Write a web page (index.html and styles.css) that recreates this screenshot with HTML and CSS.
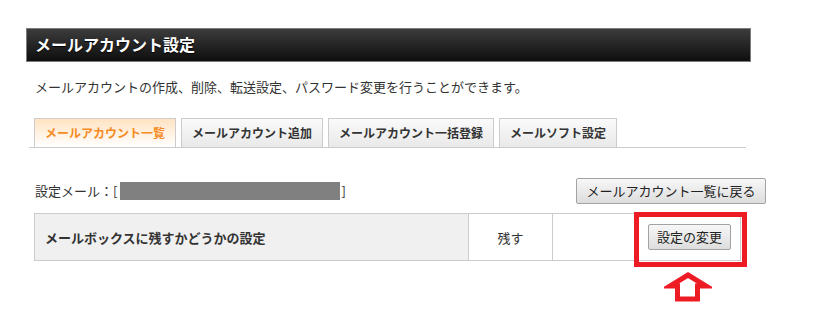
FILE: index.html
```html
<!DOCTYPE html>
<html lang="ja">
<head>
<meta charset="utf-8">
<title>メールアカウント設定</title>
<link rel="stylesheet" href="styles.css">
</head>
<body>
<div class="page">
  <div class="titlebar">メールアカウント設定</div>
  <p class="desc">メールアカウントの作成、削除、転送設定、パスワード変更を行うことができます。</p>
  <div class="tabbar">
    <div class="tab active">メールアカウント一覧</div>
    <div class="tab">メールアカウント追加</div>
    <div class="tab">メールアカウント一括登録</div>
    <div class="tab">メールソフト設定</div>
  </div>
  <div class="mailrow">
    <div class="mailtext">設定メール：[<span class="redact"></span>]</div>
    <button class="btn back">メールアカウント一覧に戻る</button>
  </div>
  <div class="settings-wrap">
    <div class="settings">
      <div class="cell label">メールボックスに残すかどうかの設定</div>
      <div class="cell value">残す</div>
      <div class="cell action"><button class="btn change">設定の変更</button></div>
    </div>
    <div class="highlight"></div>
    <svg class="arrow" width="48" height="34" viewBox="0 0 48 34">
      <polygon points="24,5 42,16 33.5,16 33.5,29 13.5,29 13.5,16 6,16" fill="#fff" stroke="#ed1c24" stroke-width="5" stroke-linejoin="miter"/>
    </svg>
  </div>
</div>
</body>
</html>
```
FILE: styles.css
```css
* { box-sizing: border-box; }
html, body { height: 100%; }
body {
  margin: 0;
  background: #fff;
  font-family: "Noto Sans CJK JP", "Noto Sans", sans-serif;
  color: #333;
}
.page {
  padding: 28px 0 0 26px;
  width: 800px;
  min-height: 325px;
}
.titlebar {
  width: 725px;
  height: 34px;
  border: 1px solid #7c7c7c;
  background: linear-gradient(to bottom, #3c3c3c, #0e0e0e);
  color: #fff;
  font-size: 16px;
  font-weight: bold;
  line-height: 31px;
  padding-left: 8px;
  text-shadow: 0 1px 1px #000;
}
.desc {
  margin: 15px 0 0 9px;
  font-size: 13px;
  line-height: 20px;
}
.tabbar {
  margin: 21px 0 0 3px;
  width: 717px;
  display: flex;
  gap: 5px;
  padding-left: 5px;
  border-bottom: 1px solid #cccccc;
}
.tab {
  height: 29px;
  padding: 0 10px;
  border: 1px solid #cccccc;
  border-bottom: none;
  background: linear-gradient(to bottom, #fafafa, #e9e9e9);
  font-size: 12px;
  font-weight: bold;
  line-height: 28px;
  color: #333;
  white-space: nowrap;
}
.tab.active {
  background: linear-gradient(to bottom, #ffe3c2, #ffffff);
  color: #f68b1f;
}
.mailrow {
  margin: 30px 0 0 9px;
  width: 731px;
  display: flex;
  align-items: center;
  justify-content: space-between;
}
.mailtext {
  font-size: 13px;
  line-height: 20px;
  display: flex;
  align-items: center;
}
.redact {
  display: inline-block;
  width: 220px;
  height: 18px;
  background: #808080;
  margin: 0 1px 0 3px;
}
.btn {
  font-family: "Noto Sans CJK JP", "Noto Sans", sans-serif;
  font-size: 13px;
  color: #222;
  height: 26px;
  line-height: 24px;
  border: 1px solid #a3a3a3;
  border-radius: 2px;
  background: linear-gradient(to bottom, #f7f7f7, #dddddd);
  cursor: pointer;
}
.back {
  width: 190px;
  padding: 0;
}
.change {
  width: 83px;
  padding: 0;
}
.settings-wrap {
  position: relative;
  margin: 9px 0 0 8px;
  width: 707px;
}
.settings {
  height: 48px;
  border: 1px solid #cccccc;
  display: grid;
  grid-template-columns: 434px 84px 1fr;
}
.cell {
  display: flex;
  align-items: center;
  font-size: 13px;
}
.label {
  background: #f0f0f0;
  font-weight: bold;
  padding-left: 10px;
  border-right: 1px solid #cccccc;
}
.value {
  justify-content: center;
  border-right: 1px solid #cccccc;
}
.action {
  justify-content: flex-end;
  padding-right: 9px;
}
.highlight {
  position: absolute;
  left: 600px;
  top: -1px;
  width: 113px;
  height: 55px;
  border: 5px solid #ed1c24;
}
.arrow {
  position: absolute;
  left: 630px;
  top: 57px;
}
```
